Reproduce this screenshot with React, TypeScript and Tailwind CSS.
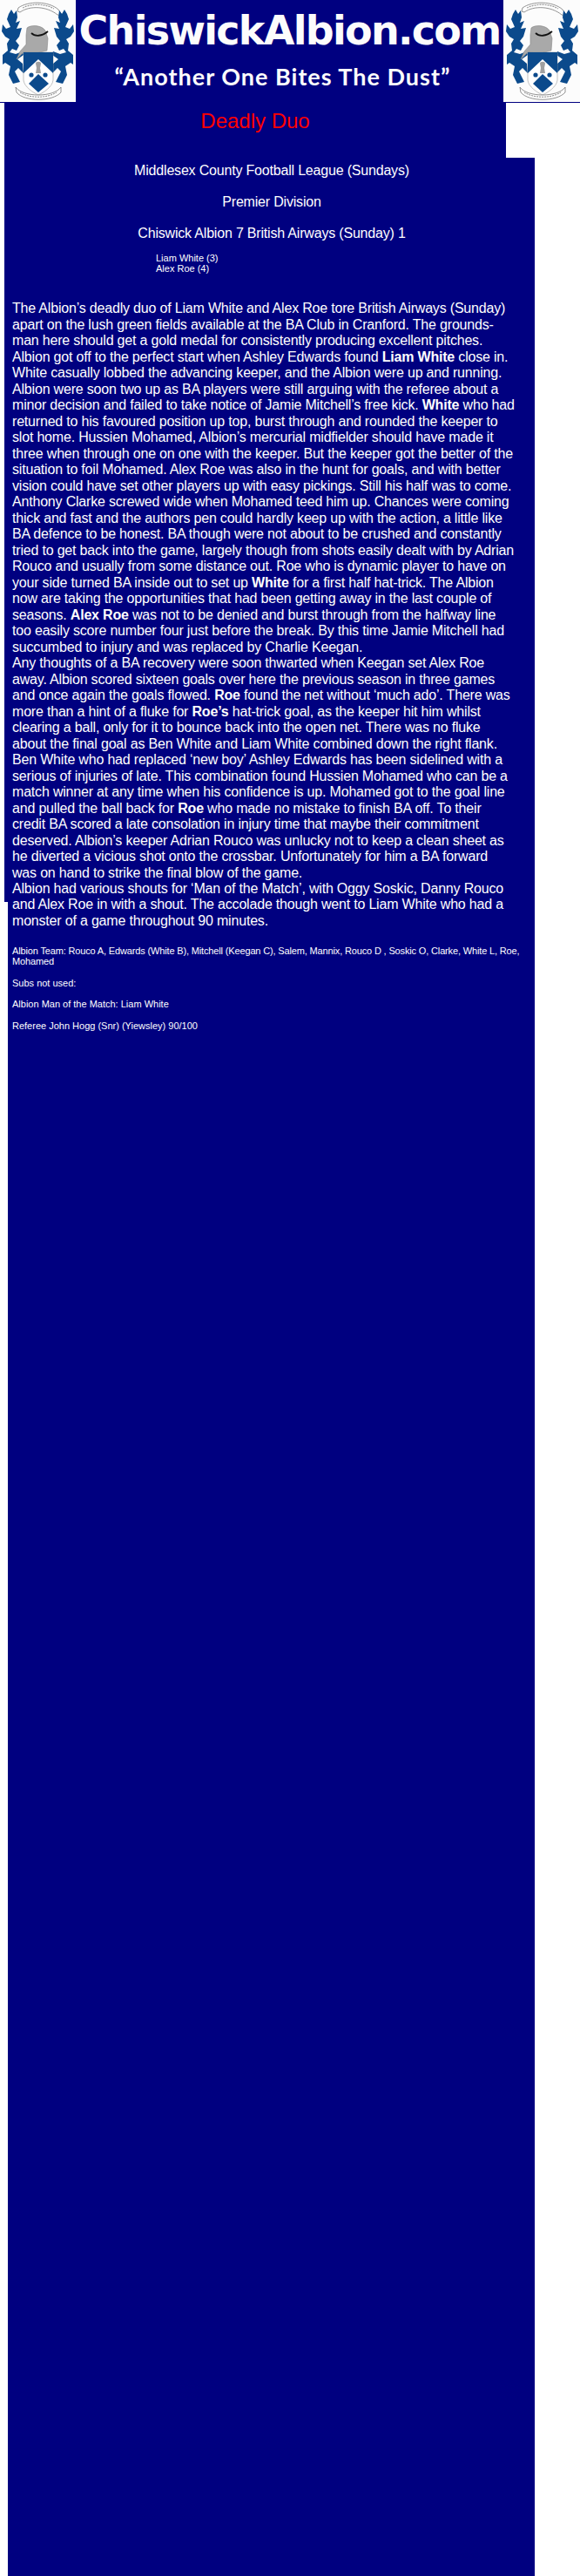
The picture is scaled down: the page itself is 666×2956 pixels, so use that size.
function Crest(): JSX.Element {
  const blue = '#0b4a8c';
  return (
    <svg viewBox="0 0 87 117" className="h-[117px] w-[87px] shrink-0 bg-[#fcfcfc]">
      {/* top scroll */}
      <path d="M21 9 C32 1 56 1 67 11 L72 18 L66 17 C54 7 34 6 23 14 L20 13 Z" fill="#fff" stroke="#777" strokeWidth="0.8" />
      <path d="M26 9 C36 4 52 4 62 10" fill="none" stroke="#999" strokeWidth="1.2" strokeDasharray="2 1" />
      {/* mantling */}
      <g fill={blue}>
        <path d="M13 11 L16 16 L19 12 L20 20 L18 26 L23 24 L19 33 L25 32 L22 42 L18 47 L22 52 L19 58 L14 56 L11 60 L18 62 L26 59 L27 63 L20 68 L26 73 L27 84 L21 78 L17 82 L23 94 L15 96 L10 86 L12 76 L6 72 L3 74 L3 63 L9 58 L8 50 L11 45 L6 42 L2 36 L3 28 L7 33 L12 31 L8 22 L10 16 Z" />
        <path d="M74 11 L71 16 L68 12 L67 20 L69 26 L64 24 L68 33 L62 32 L65 42 L69 47 L65 52 L68 58 L73 56 L76 60 L69 62 L61 59 L60 63 L67 68 L61 73 L60 84 L66 78 L70 82 L64 94 L72 96 L77 86 L75 76 L81 72 L84 74 L84 63 L78 58 L79 50 L76 45 L81 42 L85 36 L84 28 L80 33 L75 31 L79 22 L77 16 Z" />
      </g>
      {/* helmet */}
      <path d="M31 32 C36 28 48 29 52 35 L55 44 L54 58 L42 61 L27 60 L19 68 L23 59 L30 51 L30 40 Z" fill="#a9a9a9" stroke="#888" strokeWidth="0.6" />
      <path d="M36 38 C40 42 48 42 55 36" fill="none" stroke="#111" strokeWidth="1.8" />
      {/* shield */}
      <path d="M27 60 L61 60 L61 92 C60 100 50 106 44 109 C38 106 28 100 27 92 Z" fill="#fff" stroke="#999" strokeWidth="0.6" />
      <path d="M27 60 L61 60 L61 84 L44 68 L27 84 Z" fill={blue} />
      <path d="M44 85 L56 96 L44 106 L33 96 Z" fill={blue} />
      <circle cx="36" cy="86" r="2.6" fill={blue} />
      <circle cx="52" cy="86" r="2.6" fill={blue} />
      <path d="M41 73 C41 70 47 70 47 73 L46 78 L47 84 L41 84 L42 78 Z" fill="#a0a0a0" />
      {/* bottom scroll */}
      <path d="M18 100 C26 112 62 112 70 100 L70 106 C60 117 28 117 19 106 Z" fill="#fff" stroke="#777" strokeWidth="0.8" />
      <path d="M23 106 C34 113 54 113 65 106" fill="none" stroke="#888" strokeWidth="1" strokeDasharray="2 1" />
    </svg>
  );
}

export default function App(): JSX.Element {
  return (
    <div className="h-[2956px] w-[666px] overflow-hidden bg-white font-['Liberation_Sans',Arial,sans-serif] text-white">
      <header className="flex h-[118px] border-b border-[#000080] bg-[#000080]">
        <Crest />
        <div className="w-[491px] shrink-0 text-center whitespace-nowrap">
          <div className="mt-[3px] font-['DejaVu_Sans',sans-serif] text-[46px] leading-[64px] font-bold tracking-[-1.7px] text-[#fcfcfc]">
            ChiswickAlbion.com
          </div>
          <div className="mt-[4px] mr-[16px] font-['Lato',sans-serif] text-[27px] leading-[34px] font-bold tracking-[1px] text-[#fcfcfc]">
            “Another One Bites The Dust”
          </div>
        </div>
        <div className="bg-[#fcfcfc] pl-[1px]">
          <Crest />
        </div>
      </header>

      <div className="ml-[5px] h-[63px] w-[576px] bg-[#000080] pt-[5px] text-center text-[24px] leading-[32px] text-[#ff0000]">
        Deadly Duo
      </div>

      <section className="ml-[5px] h-[854px] w-[609px] bg-[#000080]">
        <div className="pl-[5px] text-center text-[16px] leading-[18px] tracking-[-0.19px]">
          <p className="pt-[6px]">Middlesex County Football League (Sundays)</p>
          <p className="pt-[18px]">Premier Division</p>
          <p className="pt-[18px]">Chiswick Albion 7 British Airways (Sunday) 1</p>
        </div>
        <div className="ml-[174px] mt-[13px] text-[11px] leading-[12px]">
          Liam White (3)
          <br />
          Alex Roe (4)
        </div>
        <p className="ml-[9px] mt-[31px] text-[16px] leading-[18.5px] tracking-[-0.19px] whitespace-nowrap">
          The Albion’s deadly duo of Liam White and Alex Roe tore British Airways (Sunday)
          <br />
          apart on the lush green fields available at the BA Club in Cranford. The grounds-
          <br />
          man here should get a gold medal for consistently producing excellent pitches.
          <br />
          Albion got off to the perfect start when Ashley Edwards found <b>Liam White</b> close in.
          <br />
          White casually lobbed the advancing keeper, and the Albion were up and running.
          <br />
          Albion were soon two up as BA players were still arguing with the referee about a
          <br />
          minor decision and failed to take notice of Jamie Mitchell’s free kick. <b>White</b> who had
          <br />
          returned to his favoured position up top, burst through and rounded the keeper to
          <br />
          slot home. Hussien Mohamed, Albion’s mercurial midfielder should have made it
          <br />
          three when through one on one with the keeper. But the keeper got the better of the
          <br />
          situation to foil Mohamed. Alex Roe was also in the hunt for goals, and with better
          <br />
          vision could have set other players up with easy pickings. Still his half was to come.
          <br />
          Anthony Clarke screwed wide when Mohamed teed him up. Chances were coming
          <br />
          thick and fast and the authors pen could hardly keep up with the action, a little like
          <br />
          BA defence to be honest. BA though were not about to be crushed and constantly
          <br />
          tried to get back into the game, largely though from shots easily dealt with by Adrian
          <br />
          Rouco and usually from some distance out. Roe who is dynamic player to have on
          <br />
          your side turned BA inside out to set up <b>White</b> for a first half hat-trick. The Albion
          <br />
          now are taking the opportunities that had been getting away in the last couple of
          <br />
          seasons. <b>Alex Roe</b> was not to be denied and burst through from the halfway line
          <br />
          too easily score number four just before the break. By this time Jamie Mitchell had
          <br />
          succumbed to injury and was replaced by Charlie Keegan.
          <br />
          Any thoughts of a BA recovery were soon thwarted when Keegan set Alex Roe
          <br />
          away. Albion scored sixteen goals over here the previous season in three games
          <br />
          and once again the goals flowed. <b>Roe</b> found the net without ‘much ado’. There was
          <br />
          more than a hint of a fluke for <b>Roe’s</b> hat-trick goal, as the keeper hit him whilst
          <br />
          clearing a ball, only for it to bounce back into the open net. There was no fluke
          <br />
          about the final goal as Ben White and Liam White combined down the right flank.
          <br />
          Ben White who had replaced ‘new boy’ Ashley Edwards has been sidelined with a
          <br />
          serious of injuries of late. This combination found Hussien Mohamed who can be a
          <br />
          match winner at any time when his confidence is up. Mohamed got to the goal line
          <br />
          and pulled the ball back for <b>Roe</b> who made no mistake to finish BA off. To their
          <br />
          credit BA scored a late consolation in injury time that maybe their commitment
          <br />
          deserved. Albion’s keeper Adrian Rouco was unlucky not to keep a clean sheet as
          <br />
          he diverted a vicious shot onto the crossbar. Unfortunately for him a BA forward
          <br />
          was on hand to strike the final blow of the game.
          <br />
          Albion had various shouts for ‘Man of the Match’, with Oggy Soskic, Danny Rouco
        </p>
      </section>

      <section className="ml-[9px] flow-root h-[1921px] w-[605px] bg-[#000080] pl-[5px]">
        <p className="-mt-[6px] text-[16px] leading-[18.5px] tracking-[-0.19px] whitespace-nowrap">
          and Alex Roe in with a shout. The accolade though went to Liam White who had a
          <br />
          monster of a game throughout 90 minutes.
        </p>
        <div className="mt-[19px] text-[11px] leading-[12px]">
          <p className="tracking-[-0.15px] whitespace-nowrap">
            Albion Team: Rouco A, Edwards (White B), Mitchell (Keegan C), Salem, Mannix, Rouco D , Soskic O, Clarke, White L, Roe,
            <br />
            Mohamed
          </p>
          <p className="mt-[13px]">Subs not used:</p>
          <p className="mt-[12px]">Albion Man of the Match: Liam White</p>
          <p className="mt-[13px]">Referee John Hogg (Snr) (Yiewsley) 90/100</p>
        </div>
      </section>
    </div>
  );
}
